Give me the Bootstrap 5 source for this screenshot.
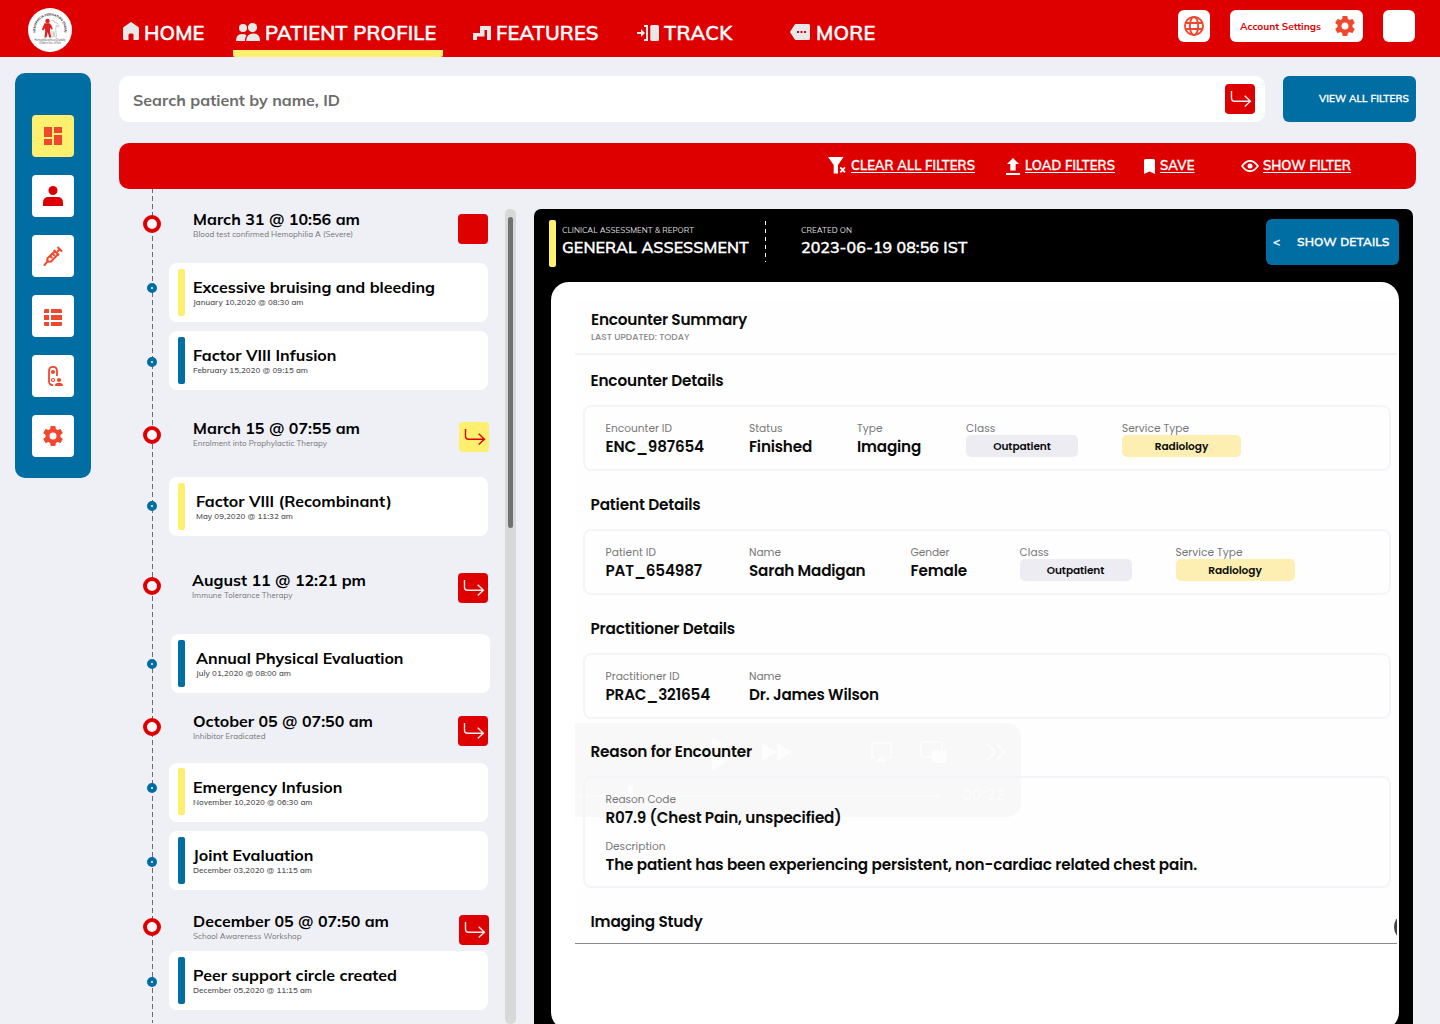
<!DOCTYPE html>
<html lang="en">
<head>
<meta charset="utf-8">
<meta name="viewport" content="width=device-width, initial-scale=1">
<title>Patient Profile</title>
<link href="https://cdn.jsdelivr.net/npm/bootstrap@5.3.0/dist/css/bootstrap.min.css" rel="stylesheet">
<style>
:root{--brand:#de0000;--blue:#006da3;--sun:#ffef6e;--tomato:#f0482f;--ink:#0b0b0b}
body{background:#eff0f6;font-family:Mulish,"Open Sans","Noto Sans",sans-serif;width:1440px;height:1024px;overflow:hidden;color:#000}
a{color:inherit}
svg{display:block;flex:none}
[data-w]{white-space:nowrap}
.t-title{font-size:16px;font-weight:700;line-height:22px}
.t-small{font-size:8px;line-height:10px;color:#777}
/* semibold capitals: a hairline stroke over the 600 weight */
.tab span{-webkit-text-stroke:.4px currentColor}
.bluebtn span,.filterbar span,.report-head .t-title span{-webkit-text-stroke:.3px currentColor}
/* header */
.topbar{height:57px;background:var(--brand);color:#fff}
.brand-logo{margin:8px 0 0 28px}
.main-nav{width:754px;margin-left:51px}
.tab{height:57px;padding-top:8px;font-size:20px;font-weight:600;line-height:50px;text-decoration:none;border-bottom:7px solid transparent}
.tab svg{fill:#e8e8e8}
.tab-home{width:110px}
.tab-home svg{margin:14px 5px 0 0}
.tab-profile{width:210px;padding-left:3px;border-color:var(--sun);border-radius:0 0 2px 2px}
.tab-profile svg{margin:15px 5px 0 0}
.tab-features{width:190px;padding-left:30px}
.tab-features svg{margin:18px 5px 0 0}
.tab-track{width:130px;padding-left:4px}
.tab-track svg{margin:17px 5px 0 0}
.tab-more{padding-left:27px}
.tab-more svg{margin:16px 6px 0 0}
.hbtn{height:32px;border-radius:6px;background:#fff;margin-top:10px;color:var(--brand);border:0}
.hbtn-sq{width:32px}
.hbtn-acc{width:133px;padding:0 8px 0 10px;margin-left:20px;margin-right:20px;font-size:10px;font-weight:700}
.hbtn-last{margin-right:25px}
/* side menu */
.side{width:76px;height:405px;margin:16px 0 0 15px;padding-top:42px;border-radius:10px;background:var(--blue);gap:18px}
.side-btn{width:42px;height:42px;border-radius:4px;background:#fff;color:var(--tomato);border:0;padding:0}
.side-btn.on{background:var(--sun)}
.ic-records{margin-top:2px}
/* search and filters */
.main-col{width:1297px;margin-left:28px;padding-top:19px}
.search{width:1146px;height:46px;border-radius:10px;background:#fff;padding:0 10px 0 14px;font-size:16px;font-weight:700;color:#6d6d6d}
.search span{padding-top:2px}
.go{width:30px;height:30px;border-radius:4px;background:var(--brand);color:#eee;border:0;padding:0;flex:none}
.go-sun{background:var(--sun);color:var(--brand)}
.bluebtn{width:133px;height:46px;border-radius:6px;background:var(--blue);color:#fff;border:0;font-weight:600;flex:none}
.view-all{margin-left:18px;font-size:10px;padding:0 7px 1px 0}
.filterbar{height:46px;margin-top:21px;border-radius:10px;background:var(--brand);color:#fff;font-size:13px;font-weight:600;padding-left:709px}
.filterbar a{text-underline-offset:2px;text-decoration-thickness:1px;margin-left:5px}
.filterbar .filter-clear{margin-left:4px}
.filterbar .filter-show{margin-left:4px}
.ic-load{margin-left:31px}.ic-save{margin-left:29px}.ic-show{margin-left:46.5px}
/* timeline */
.timeline{width:386px;height:835px;padding:18px 0 0 24px;background:repeating-linear-gradient(#6b6b6b 0 5.3px,transparent 5.3px 8px) 33px -1px/1px 100% no-repeat}
.stone{height:34px}
.mk{flex:none;border-radius:50%;background:#fff}
.ring{width:18px;height:18px;border:4.5px solid var(--brand);margin-right:32px;background:#f8f8fc}
.dot{width:10px;height:10px;border:4px solid var(--blue);margin:0 12px 0 4px}
.stone .words{width:265px;padding-top:1px}
.stone .t-small{margin-top:-1px}
.stone .words.far{margin-right:1px}
.stone .words.nudge{margin-left:-1px;margin-right:1px}
.ev{height:59px}
.ev-card{width:319px;height:59px;border-radius:8px;background:#fff;padding:6px 0 0 9px}
.ev-bar{width:7px;height:47px;border-radius:2px;flex:none;margin-right:8px}
.bar-sun{background:var(--sun)}.bar-blue{background:var(--blue)}
.ev-card .words{padding-top:7px}
.ev .t-small{margin-top:-1px;font-weight:600;color:#555}
.wide-gap .ev-bar{margin-right:11px}
.shifted .ev-card{margin-left:2px;padding-left:7px}
.tight .ev-card{padding-top:5px}.tight .words{padding-top:8px}
.p7{margin-top:7px}.p6{margin-top:6px}.p5{margin-top:5px}.p8{margin-top:8px}.p9{margin-top:9px}.p10{margin-top:10px}
.p20{margin-top:20px}.p24{margin-top:24px}.p25{margin-top:25px}.p26{margin-top:26px}
.g8{margin-top:8px}.g9{margin-top:9px}.g16{margin-top:16px}.g19{margin-top:19px}.g20{margin-top:20px}.g22{margin-top:22px}.g26{margin-top:26px}.g27{margin-top:27px}.g32{margin-top:32px}
.track{width:11px;height:815px;margin-top:20px;border-radius:5px;background:#d8d8d8;padding:8px 3px}
.thumb{width:5px;height:311px;border-radius:3px;background:#707070}
/* report */
.report{width:879px;height:830px;margin:20px 0 0 18px;background:#000;border-radius:7px 7px 0 0;color:#fff}
.report-head{height:73px;padding:10px 14px 0 15px}
.report-head .ev-bar{margin:1px 6px 0 0}
.report-head .t-small{color:#ddd;margin-top:6px}
.report-head .t-title{margin-top:1px;font-weight:600}
.vdash{width:1px;height:41px;margin:2px 35px 0 16px;background:repeating-linear-gradient(#fff 0 4px,transparent 4px 8px)}
.show-d{font-size:12px;padding:0 9.5px 1px 7px}
.sheet{width:848px;height:748px;margin-left:17px;border-radius:18px;background:#fff;padding:20px 2px 0 24px;color:var(--ink);font-family:Poppins,Inter,sans-serif}
.shot{width:822px;height:642px;background:#fefefe;border-bottom:1px solid #8b8994;position:relative;overflow:hidden;isolation:isolate}
.shot-head{height:53px;border-bottom:2px solid #f2f2f5;padding:8px 0 0 16px}
.h-sec{font-size:15.3px;font-weight:600;line-height:20px;padding-left:15.5px}
.upd{font-size:9px;line-height:10px;margin-top:2px;color:#888;font-weight:500}
.box{width:808px;height:66px;border:2px solid #f5f5f9;border-radius:8px;margin:14px 0 0 8px;padding:15px 0 0 20.5px}
.lab{font-size:10.6px;line-height:14px;color:#777}
.val{font-size:15.2px;line-height:20px;font-weight:600;margin-top:1px}
.pill{height:22px;border-radius:5px;font-size:10.6px;font-weight:600;line-height:23px;margin-top:-1px}
.pill-gray{width:112px;background:#ececf2}.pill-sun{width:119px;background:#fdeeb2}
.f144{width:143.5px}.f108{width:108px}.f109{width:109px}.f156{width:156px}.f161{width:161.5px}
.s1{margin-top:16px}.s2{margin-top:24px}.s3{margin-top:23px}
.box-tall{height:112px}
.lab-2{margin-top:11.500px}
.player{position:absolute;z-index:-1;left:0;top:421px;width:446px;height:94px;border-radius:0 14px 14px 0;background:rgba(0,0,0,.022)}
.player svg{opacity:.8}
.knob{position:absolute;left:819px;top:614px;width:16px;height:22px;border-radius:50%;background:#444}
</style>
<script src="https://cdn.jsdelivr.net/npm/bootstrap@5.3.0/dist/js/bootstrap.bundle.min.js"></script>
</head>
<body>
<svg width="0" height="0" class="position-absolute">
  <symbol id="enter" viewBox="0 0 30 30"><path d="M6.500 7v7.200q0 3 3 3H25.200M19.700 11.800l5.700 5.400-5.700 5.400" fill="none" stroke="currentColor" stroke-width="1.400"/></symbol>
  <symbol id="gear" viewBox="2 2 20 20"><path fill="currentColor" d="M19.430 12.980c.04-.32.07-.64.07-.98s-.03-.66-.07-.98l2.110-1.650c.19-.15.24-.42.12-.64l-2-3.460c-.12-.22-.39-.3-.61-.22l-2.490 1c-.52-.4-1.080-.73-1.690-.98l-.38-2.650A.49.49 0 0 0 14 2h-4c-.25 0-.46.18-.49.42l-.38 2.650c-.61.25-1.170.59-1.690.98l-2.490-1c-.23-.09-.49 0-.61.22l-2 3.460c-.13.22-.07.49.12.64l2.110 1.650c-.04.32-.07.65-.07.98s.03.66.07.98l-2.110 1.650c-.19.15-.24.42-.12.64l2 3.460c.12.22.39.3.61.22l2.490-1c.52.4 1.080.73 1.690.98l.38 2.650c.03.24.24.42.49.42h4c.25 0 .46-.18.49-.42l.38-2.650c.61-.25 1.170-.59 1.690-.98l2.490 1c.23.09.49 0 .61-.22l2-3.460c.12-.22.07-.49-.12-.64zM12 15.500a3.500 3.500 0 1 1 0-7 3.500 3.500 0 0 1 0 7z"/></symbol>
</svg>

<header class="topbar d-flex align-items-start">
  <svg class="brand-logo" width="44" height="44" viewBox="0 0 44 44">
    <circle cx="22" cy="22" r="22" fill="#fff"/>
    <path id="arc" d="M7.600 24.500A14.600 14.600 0 1 1 36.400 24.500" fill="none"/>
    <text font-size="3.100" font-weight="700" fill="#333" font-family="Open Sans,sans-serif"><textPath href="#arc" textLength="50">HEMOPHILIA FEDERATION (INDIA)</textPath></text>
    <circle cx="19.500" cy="13" r="2.200" fill="#e02020"/>
    <path fill="#e02020" d="M16.500 15.300h5l2 2.200 1.300 3.500-1.200.6-1.400-2.100-.2 3.500 1.200 6.500h-2l-1.500-5.500-1.200 5.500h-2l.7-6.500-.6-3-1.200 2.600-1.600-.8z"/>
    <path fill="none" stroke="#aaa" stroke-width=".6" d="M23 13.500q.5-1.600 2-1.300t1.300 2l3 1 1.800 3.500-.8.6-2-2.300-.6 4 .8 8h-1.500l-1-5.500-1 5.500h-1v-6"/>
    <text x="22" y="33.400" font-size="2.600" text-anchor="middle" textLength="31" fill="#555" font-family="Open Sans,sans-serif">Hemophilia without Disability</text>
    <text x="22" y="36.200" font-size="2.600" text-anchor="middle" textLength="22" fill="#555" font-family="Open Sans,sans-serif">Children free of Pain</text>
  </svg>
  <nav class="main-nav d-flex">
    <a class="tab tab-home d-flex text-white" href="#"><svg width="16" height="18" viewBox="0 0 16 18"><path d="M8 0l7 4.800q1 .7 1 1.800V16.500q0 1.500-1.500 1.500H10.500V13q0-1.500-1.300-1.500H7Q5.500 11.500 5.500 13v5H1.500Q0 18 0 16.500V6.600Q0 5.500 1 4.800z"/></svg><span data-w="60.5">HOME</span></a>
    <a class="tab tab-profile d-flex text-white" href="#"><svg width="24" height="18" viewBox="0 0 24 18"><circle cx="7" cy="5" r="4"/><circle cx="16.500" cy="4.600" r="4.600"/><path d="M0 18q0-7 6-7 3 0 4.500 1.200Q9 14 9 18zM10.300 18q0-7.500 7-7.500t6.700 7.500z"/></svg><span data-w="171.5">PATIENT PROFILE</span></a>
    <a class="tab tab-features d-flex text-white" href="#"><svg width="18" height="14" viewBox="0 0 18 14"><path d="M0 14V7h7V0h11v14h-4V4h-2.500v6.500H4V14z"/></svg><span data-w="102.5">FEATURES</span></a>
    <a class="tab tab-track d-flex text-white" href="#"><svg width="22" height="16" viewBox="0 0 22 16"><path d="M0 7h4V4l4 4-4 4V9H0zM7 0h4v16H7v-2h2V2H7z"/><rect x="13.300" width="8.700" height="16" rx="1.500"/></svg><span data-w="68.5">TRACK</span></a>
    <a class="tab tab-more d-flex text-white" href="#"><svg width="20" height="16" viewBox="0 0 20 16"><path fill-rule="evenodd" d="M6 0h12.500Q20 0 20 1.500v13q0 1.500-1.500 1.500H6Q5 16 4.400 15L0 8 4.400 1Q5 0 6 0zM7 7v2h2V7zm3.500 0v2h2V7zM14 7v2h2V7z"/></svg><span data-w="59.5">MORE</span></a>
  </nav>
  <button class="hbtn hbtn-sq d-flex align-items-center justify-content-center p-0 ms-auto" aria-label="Language"><svg width="20" height="20" viewBox="0 0 20 20" fill="none" stroke="#f0482f" stroke-width="1.900"><circle cx="10" cy="10" r="9.050"/><ellipse cx="10" cy="10" rx="4.200" ry="9.050"/><path d="M1.500 7h17M1.500 13h17"/></svg></button>
  <button class="hbtn hbtn-acc d-flex align-items-center justify-content-between"><span data-w="81">Account Settings</span><svg width="20" height="20" color="#f0482f"><use href="#gear"/></svg></button>
  <button class="hbtn hbtn-sq hbtn-last" aria-label="Profile"></button>
</header>

<div class="d-flex align-items-start">
  <aside class="side d-flex flex-column align-items-center">
    <button class="side-btn on d-flex align-items-center justify-content-center" aria-label="Dashboard"><svg width="18" height="18" fill="currentColor"><path d="M0 0h8v10H0zM0 12h8v6H0zM10 0h8v6h-8zM10 8h8v10h-8z"/></svg></button>
    <button class="side-btn d-flex align-items-center justify-content-center" aria-label="Patient"><svg width="20" height="20" fill="#de0000"><circle cx="10" cy="4.500" r="4.500"/><path d="M0 20v-3.500Q0 11 5.500 11h9q5.500 0 5.500 5.500V20z"/></svg></button>
    <button class="side-btn d-flex align-items-center justify-content-center" aria-label="Infusions"><svg width="20" height="20" viewBox="0 0 20 20" fill="none" stroke="currentColor" stroke-width="2"><path d="M1 19.700l4.500-5.500M14.500 1l4.500 4.500M16.800 3.200l-2.500 2.500M10.800 4l5.200 5.200M12.200 5L4.500 12.200l-.3 2.600.9 .9L8 15.500l7-7.200M7.200 10l2 2M9.700 7.700l2 2"/></svg></button>
    <button class="side-btn d-flex align-items-center justify-content-center" aria-label="Records"><svg class="ic-records" width="18" height="20" viewBox="0 -1 18 20" fill="currentColor"><path d="M1.500 1H5v4H0V2.500Q0 1 1.500 1zM7 1h9.500Q18 1 18 2.500V5H7zM0 7h5v5H0zM7 7h11v5H7zM0 14h5v4H1.500Q0 18 0 16.500zM7 14h11v2.500q0 1.500-1.500 1.500H7z"/></svg></button>
    <button class="side-btn d-flex align-items-center justify-content-center" aria-label="Monitor"><svg width="20" height="20" viewBox="0 0 20 20"><path d="M10 19.200Q6 19 6 15V5Q6 .9 10 .9t4 4.100v5" fill="none" stroke="currentColor" stroke-width="1.800"/><g fill="currentColor"><circle cx="10" cy="6" r="2.100"/><circle cx="16" cy="14" r="2.100"/><path d="M12 20q0-3.200 4-3.200t4 3.200z"/></g><circle cx="10" cy="14" r="1.500" fill="none" stroke="currentColor" stroke-width="1.200"/></svg></button>
    <button class="side-btn d-flex align-items-center justify-content-center" aria-label="Settings"><svg width="20" height="20"><use href="#gear"/></svg></button>
  </aside>

  <main class="main-col">
    <div class="d-flex">
      <div class="search d-flex align-items-center justify-content-between"><span data-w="207">Search patient by name, ID</span><button class="go" aria-label="Search"><svg width="30" height="30"><use href="#enter"/></svg></button></div>
      <button class="bluebtn view-all d-flex align-items-center justify-content-end"><span data-w="90">VIEW ALL FILTERS</span></button>
    </div>
    <div class="filterbar d-flex align-items-center">
      <svg width="19" height="18" viewBox="0 0 19 18"><path fill="#fff" d="M0 0h15.500L10 8v8.500H5.700V8z"/><path d="M12.300 10.300l4.700 5M17 10.300l-4.700 5" stroke="#fff" stroke-width="1.800"/></svg>
      <a class="filter-clear" href="#"><span data-w="124">CLEAR ALL FILTERS</span></a>
      <svg class="ic-load" width="14" height="17" fill="#fff"><path d="M7 0l6 6H9.700v6.500H4.300V6H1zM0 15h14v2H0z"/></svg>
      <a href="#"><span data-w="90">LOAD FILTERS</span></a>
      <svg class="ic-save" width="11" height="15" fill="#fff"><path d="M1.500 0h8Q11 0 11 1.500V15l-5.500-2.500L0 15V1.500Q0 0 1.500 0z"/></svg>
      <a href="#"><span data-w="34.5">SAVE</span></a>
      <svg class="ic-show" width="18" height="12" viewBox="0 0 18 12"><path d="M1 6q8-10.400 16 0-8 10.400-16 0z" fill="none" stroke="#fff" stroke-width="1.700"/><circle cx="9" cy="6" r="2.500" fill="#fff"/></svg>
      <a class="filter-show" href="#"><span data-w="88">SHOW FILTER</span></a>
    </div>

    <div class="d-flex align-items-start">
      <section class="timeline">
        <div class="stone d-flex align-items-start"><i class="mk ring p8"></i><div class="words"><div class="t-title"><span data-w="167">March 31 @ 10:56 am</span></div><div class="t-small"><span data-w="160">Blood test confirmed Hemophilia A (Severe)</span></div></div><button class="go p7" aria-label="Open"></button></div>
        <div class="ev g22 d-flex align-items-start"><i class="mk dot p20"></i><div class="ev-card d-flex align-items-start"><i class="ev-bar bar-sun"></i><div class="words"><div class="t-title"><span data-w="242">Excessive bruising and bleeding</span></div><div class="t-small"><span data-w="110.5">January 10,2020 @ 08:30 am</span></div></div></div></div>
        <div class="ev g9 d-flex align-items-start"><i class="mk dot p26"></i><div class="ev-card d-flex align-items-start"><i class="ev-bar bar-blue"></i><div class="words"><div class="t-title"><span data-w="143.5">Factor VIII Infusion</span></div><div class="t-small"><span data-w="115">February 15,2020 @ 09:15 am</span></div></div></div></div>
        <div class="stone g26 d-flex align-items-start"><i class="mk ring p10"></i><div class="words far"><div class="t-title"><span data-w="167">March 15 @ 07:55 am</span></div><div class="t-small"><span data-w="134">Enrolment into Prophylactic Therapy</span></div></div><button class="go go-sun p6" aria-label="Open"><svg width="30" height="30"><use href="#enter"/></svg></button></div>
        <div class="ev wide-gap g27 d-flex align-items-start"><i class="mk dot p24"></i><div class="ev-card d-flex align-items-start"><i class="ev-bar bar-sun"></i><div class="words"><div class="t-title"><span data-w="196">Factor VIII (Recombinant)</span></div><div class="t-small"><span data-w="97">May 09,2020 @ 11:32 am</span></div></div></div></div>
        <div class="stone g32 d-flex align-items-start"><i class="mk ring p9"></i><div class="words nudge"><div class="t-title"><span data-w="174">August 11 @ 12:21 pm</span></div><div class="t-small"><span data-w="100.5">Immune Tolerance Therapy</span></div></div><button class="go p5" aria-label="Open"><svg width="30" height="30"><use href="#enter"/></svg></button></div>
        <div class="ev wide-gap shifted g32 d-flex align-items-start"><i class="mk dot p25"></i><div class="ev-card d-flex align-items-start"><i class="ev-bar bar-blue"></i><div class="words"><div class="t-title"><span data-w="207.5">Annual Physical Evaluation</span></div><div class="t-small"><span data-w="95">July 01,2020 @ 08:00 am</span></div></div></div></div>
        <div class="stone g16 d-flex align-items-start"><i class="mk ring p9"></i><div class="words"><div class="t-title"><span data-w="180">October 05 @ 07:50 am</span></div><div class="t-small"><span data-w="72.5">Inhibitor Eradicated</span></div></div><button class="go p7" aria-label="Open"><svg width="30" height="30"><use href="#enter"/></svg></button></div>
        <div class="ev tight g20 d-flex align-items-start"><i class="mk dot p20"></i><div class="ev-card d-flex align-items-start"><i class="ev-bar bar-sun"></i><div class="words"><div class="t-title"><span data-w="149.5">Emergency Infusion</span></div><div class="t-small"><span data-w="119.5">November 10,2020 @ 06:30 am</span></div></div></div></div>
        <div class="ev g9 d-flex align-items-start"><i class="mk dot p26"></i><div class="ev-card d-flex align-items-start"><i class="ev-bar bar-blue"></i><div class="words"><div class="t-title"><span data-w="120.5">Joint Evaluation</span></div><div class="t-small"><span data-w="119">December 03,2020 @ 11:15 am</span></div></div></div></div>
        <div class="stone g19 d-flex align-items-start"><i class="mk ring p9"></i><div class="words far"><div class="t-title"><span data-w="196">December 05 @ 07:50 am</span></div><div class="t-small"><span data-w="108.5">School Awareness Workshop</span></div></div><button class="go p6" aria-label="Open"><svg width="30" height="30"><use href="#enter"/></svg></button></div>
        <div class="ev g8 d-flex align-items-start"><i class="mk dot p26"></i><div class="ev-card d-flex align-items-start"><i class="ev-bar bar-blue"></i><div class="words"><div class="t-title"><span data-w="204">Peer support circle created</span></div><div class="t-small"><span data-w="119">December 05,2020 @ 11:15 am</span></div></div></div></div>
      </section>
      <div class="track"><div class="thumb"></div></div>

      <section class="report">
        <div class="report-head d-flex align-items-start">
          <i class="ev-bar bar-sun"></i>
          <div><div class="t-small"><span data-w="132">CLINICAL ASSESSMENT &amp; REPORT</span></div><div class="t-title"><span data-w="187">GENERAL ASSESSMENT</span></div></div>
          <div class="vdash"></div>
          <div><div class="t-small"><span data-w="51">CREATED ON</span></div><div class="t-title"><span data-w="166.5">2023-06-19 08:56 IST</span></div></div>
          <button class="bluebtn show-d ms-auto d-flex align-items-center justify-content-between"><span>&lt;</span><span data-w="92.5">SHOW DETAILS</span></button>
        </div>
        <div class="sheet">
          <div class="shot">
            <div class="shot-head"><div class="h-sec ps-0"><span data-w="156">Encounter Summary</span></div><div class="upd"><span data-w="98.5">LAST UPDATED: TODAY</span></div></div>
            <div class="h-sec s1"><span data-w="133">Encounter Details</span></div>
            <div class="box d-flex">
              <div class="f144"><div class="lab"><span data-w="66.5">Encounter ID</span></div><div class="val"><span data-w="98.5">ENC_987654</span></div></div>
              <div class="f108"><div class="lab"><span data-w="33.5">Status</span></div><div class="val"><span data-w="63">Finished</span></div></div>
              <div class="f109"><div class="lab"><span data-w="25.5">Type</span></div><div class="val"><span data-w="64">Imaging</span></div></div>
              <div class="f156"><div class="lab"><span data-w="29.5">Class</span></div><div class="pill pill-gray text-center"><span data-w="57.5">Outpatient</span></div></div>
              <div><div class="lab"><span data-w="67">Service Type</span></div><div class="pill pill-sun text-center"><span data-w="53.5">Radiology</span></div></div>
            </div>
            <div class="h-sec s2"><span data-w="110">Patient Details</span></div>
            <div class="box d-flex">
              <div class="f144"><div class="lab"><span data-w="50.5">Patient ID</span></div><div class="val"><span data-w="96.5">PAT_654987</span></div></div>
              <div class="f161"><div class="lab"><span data-w="32">Name</span></div><div class="val"><span data-w="116.5">Sarah Madigan</span></div></div>
              <div class="f109"><div class="lab"><span data-w="39">Gender</span></div><div class="val"><span data-w="56.5">Female</span></div></div>
              <div class="f156"><div class="lab"><span data-w="29.5">Class</span></div><div class="pill pill-gray text-center"><span data-w="57.5">Outpatient</span></div></div>
              <div><div class="lab"><span data-w="67">Service Type</span></div><div class="pill pill-sun text-center"><span data-w="53.5">Radiology</span></div></div>
            </div>
            <div class="h-sec s2"><span data-w="144.5">Practitioner Details</span></div>
            <div class="box d-flex">
              <div class="f144"><div class="lab"><span data-w="74">Practitioner ID</span></div><div class="val"><span data-w="104.5">PRAC_321654</span></div></div>
              <div><div class="lab"><span data-w="32">Name</span></div><div class="val"><span data-w="130">Dr. James Wilson</span></div></div>
            </div>
            <div class="h-sec s3"><span data-w="161.5">Reason for Encounter</span></div>
            <div class="box box-tall">
              <div class="lab"><span data-w="70.5">Reason Code</span></div><div class="val"><span data-w="236">R07.9 (Chest Pain, unspecified)</span></div>
              <div class="lab lab-2"><span data-w="60">Description</span></div><div class="val"><span data-w="591.5">The patient has been experiencing persistent, non-cardiac related chest pain.</span></div>
            </div>
            <div class="h-sec s2"><span data-w="112">Imaging Study</span></div>
            <div class="player"><svg width="446" height="94" fill="#fff"><path d="M137 14l26 17-26 17zM187 20l15 9v-9l15 9-15 9v-9l-15 9z"/><rect y="71.500" width="366" height="3" opacity=".5"/><rect x="53" y="62" width="5" height="22" rx="2"/><path d="M301 35h-4V20h19v15h-4" fill="none" stroke="#fff" stroke-width="1.500"/><path d="M306.500 32l6 7h-12z"/><rect x="346" y="19" width="21" height="15" rx="3" fill="none" stroke="#fff" stroke-width="1.500"/><rect x="357" y="27" width="15" height="13" rx="3"/><path d="M412 20l8 9-8 9M421 20l8 9-8 9" fill="none" stroke="#fff" stroke-width="1.500"/><text x="387" y="77" font-size="15" textLength="43" font-family="Inter,sans-serif">00:22</text></svg></div>
            <div class="knob"></div>
          </div>
        </div>
      </section>
    </div>
  </main>
</div>
<script>
// Track each label so that it fills the width given in data-w
document.querySelectorAll('[data-w]').forEach(function (el) {
  var n = el.textContent.length, w = el.getBoundingClientRect().width;
  el.style.letterSpacing = ((+el.dataset.w - w) / n).toFixed(3) + 'px';
});
</script>
</body>
</html>
